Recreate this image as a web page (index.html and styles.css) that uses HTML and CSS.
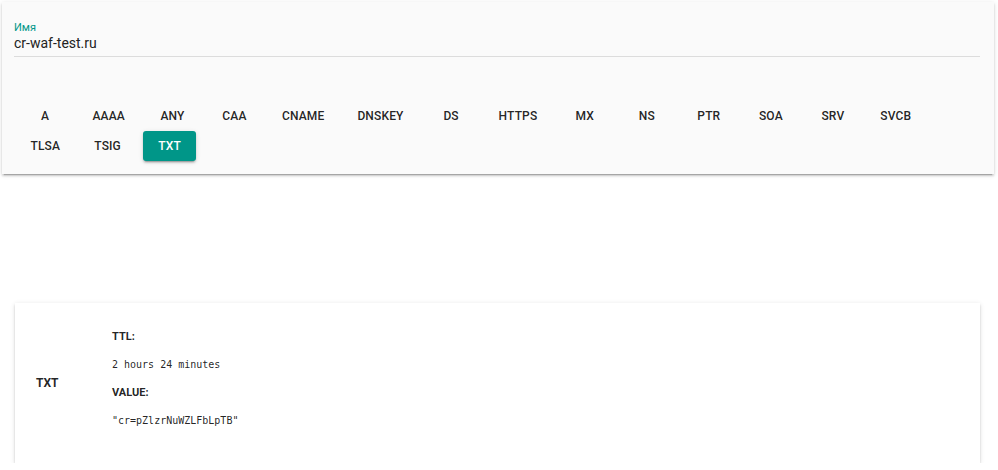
FILE: index.html
```html
<!DOCTYPE html>
<html lang="ru">
<head>
    <meta charset="UTF-8">
    <meta name="viewport" content="width=device-width, initial-scale=1.0">
    <title>DNS lookup</title>
    <link rel="stylesheet" href="styles.css">
</head>
<body>
    <div class="page">
        <div class="query-card">
            <div class="text-field">
                <label class="field-label">Имя</label>
                <div class="field-input">cr-waf-test.ru</div>
            </div>

            <div class="record-types">
                <button class="type-btn">A</button>
                <button class="type-btn">AAAA</button>
                <button class="type-btn">ANY</button>
                <button class="type-btn">CAA</button>
                <button class="type-btn">CNAME</button>
                <button class="type-btn">DNSKEY</button>
                <button class="type-btn">DS</button>
                <button class="type-btn">HTTPS</button>
                <button class="type-btn">MX</button>
                <button class="type-btn">NS</button>
                <button class="type-btn">PTR</button>
                <button class="type-btn">SOA</button>
                <button class="type-btn">SRV</button>
                <button class="type-btn">SVCB</button>
                <button class="type-btn">TLSA</button>
                <button class="type-btn">TSIG</button>
                <button class="type-btn active">TXT</button>
            </div>
        </div>

        <div class="result-card">
            <div class="result-type">TXT</div>
            <div class="result-body">
                <div class="result-key">TTL:</div>
                <div class="result-value">2 hours 24 minutes</div>
                <div class="result-key">VALUE:</div>
                <div class="result-value">"cr=pZlzrNuWZLFbLpTB"</div>
            </div>
        </div>
    </div>
</body>
</html>
```

FILE: styles.css
```css
body {
    font-family: Roboto, "Noto Sans", sans-serif;
    margin: 0;
    padding: 0;
    background-color: #fff;
    color: rgba(0, 0, 0, 0.87);
}

.page {
    padding: 2px 4px 0 2px;
}

.query-card {
    background: #fafafa;
    padding: 19px 14px 13px 12px;
    box-shadow: 0 3px 1px -2px rgba(0,0,0,0.2), 0 2px 2px 0 rgba(0,0,0,0.14), 0 1px 5px 0 rgba(0,0,0,0.12);
}

.text-field {
    border-bottom: 1px solid #dcdcdc;
    padding-bottom: 4px;
}

.field-label {
    display: block;
    font-size: 11px;
    line-height: 13px;
    color: #009688;
}

.field-input {
    font-size: 14px;
    line-height: 18px;
    color: #222;
}

.record-types {
    display: flex;
    flex-wrap: wrap;
    margin-top: 44px;
}

.type-btn {
    font-family: Roboto, sans-serif;
    font-size: 12px;
    font-weight: 500;
    letter-spacing: 0.15px;
    height: 30px;
    min-width: 53px;
    padding: 0 12px;
    margin: 0 4.5px;
    border: none;
    border-radius: 3px;
    background: transparent;
    color: rgba(0, 0, 0, 0.87);
    cursor: pointer;
}

.type-btn.active {
    background: #009688;
    color: #fff;
    box-shadow: 0 3px 1px -2px rgba(0,0,0,0.2), 0 2px 2px 0 rgba(0,0,0,0.14), 0 1px 5px 0 rgba(0,0,0,0.12);
}

.result-card {
    display: flex;
    align-items: center;
    margin: 129px 14px 0 13px;
    height: 160px;
    background: #fff;
    box-shadow: 0 3px 1px -2px rgba(0,0,0,0.2), 0 2px 2px 0 rgba(0,0,0,0.14), 0 1px 5px 0 rgba(0,0,0,0.12);
}

.result-type {
    width: 76px;
    padding-left: 21px;
    font-size: 12px;
    font-weight: bold;
}

.result-body {
    align-self: flex-start;
    padding-top: 27px;
}

.result-key {
    font-size: 11px;
    font-weight: bold;
    line-height: 14px;
    margin-bottom: 14px;
}

.result-value {
    font-family: "DejaVu Sans Mono", monospace;
    font-size: 10px;
    line-height: 14px;
    margin-bottom: 14px;
}
```
